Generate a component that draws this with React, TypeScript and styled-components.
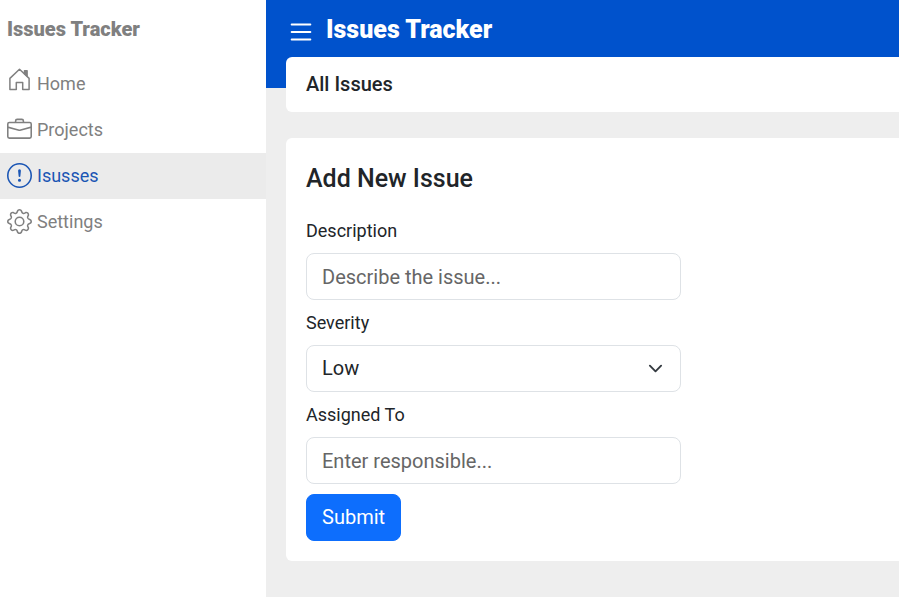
import React from "react";
import styled, { createGlobalStyle, css } from "styled-components";
import { BsBriefcase, BsExclamationCircle, BsGear, BsList } from "react-icons/bs";

const GlobalStyle = createGlobalStyle`
  *, *::before, *::after { box-sizing: border-box; }
  body { margin: 0; font-family: Roboto, sans-serif; font-size: 18px; line-height: 25px; color: #212529; background: #eee; }
`;

const Layout = styled.div`
  display: flex;
  min-height: 100vh;
`;

const Sidebar = styled.aside`
  flex: 0 0 266px;
  background: #fff;
`;

const Brand = styled.div`
  padding: 14px 7px 17px;
  font-size: 20px;
  line-height: 30px;
  font-weight: 900;
  color: #808080;
`;

const NavLink = styled.a<{ $active?: boolean; $raised?: boolean }>`
  display: flex;
  align-items: center;
  gap: 5px;
  height: 46px;
  padding: 0 7px 2px;
  color: #808080;
  text-decoration: none;
  ${(p) => p.$active && css`
    color: #1a55b4;
    background: #ebebeb;
  `}
  svg {
    width: 25px;
    height: 25px;
    margin-bottom: ${(p) => (p.$raised ? "8px" : "0")};
  }
`;

const Content = styled.div`
  flex: 1;
  min-width: 0;
`;

const Banner = styled.header`
  display: flex;
  align-items: flex-start;
  gap: 10px;
  height: 88px;
  padding: 14px 20px 0;
  background: #0052cc;
  color: #fff;
`;

const MenuButton = styled.button`
  display: flex;
  margin: 3px 0 0;
  padding: 0;
  border: 0;
  background: none;
  color: inherit;
`;

const Title = styled.h1`
  margin: 0;
  font-size: 25px;
  line-height: 32px;
  font-weight: 900;
`;

const Main = styled.main`
  display: grid;
  gap: 26px;
  margin-top: -31px;
  padding-left: 20px;
`;

const Panel = styled.section`
  padding: 20px;
  background: #fff;
  border-radius: 6px 0 0 6px;
`;

const PageBar = styled(Panel)`
  padding: 15px 20px;
  font-size: 20px;
  font-weight: 500;
`;

const Heading = styled.h2`
  margin: 0 0 18px;
  font-size: 25px;
  line-height: 42px;
  font-weight: 500;
`;

const Form = styled.form`
  display: flex;
  flex-direction: column;
  align-items: flex-start;
  gap: 10px;
`;

const Field = styled.label`
  display: grid;
  gap: 10px;
  width: 100%;
  max-width: 375px;
`;

const control = css`
  width: 100%;
  height: 47px;
  padding: 0 15px;
  border: 1px solid #dee2e6;
  border-radius: 8px;
  background: #fff;
  color: #212529;
  font: inherit;
  font-size: 20px;
`;

const Input = styled.input`
  ${control}
  &::placeholder { color: #666; opacity: 1; }
`;

const SelectWrap = styled.span`
  display: grid;
  align-items: center;
  > * { grid-area: 1 / 1; }
  svg { justify-self: end; margin-right: 18px; pointer-events: none; }
`;

const Select = styled.select`
  ${control}
  appearance: none;
`;

const Submit = styled.button`
  height: 47px;
  padding: 0 15px;
  border: 1px solid #0d6efd;
  border-radius: 8px;
  background: #0d6efd;
  color: #fff;
  font: inherit;
  font-size: 20px;
`;

const HouseIcon = () => (
  <svg viewBox="0 0 25 25" fill="none" stroke="currentColor" strokeWidth="1.5" strokeLinejoin="round" aria-hidden="true">
    <path d="M2.9 11.4 12.5 2.3l9.6 9.1v11.2h-6.4v-7.1H9.3v7.1H2.9z" />
    <path d="M17.5 3.8h2.6v5.2l-2.6-2.4z" fill="currentColor" />
  </svg>
);

const ChevronIcon = () => (
  <svg width="15" height="15" viewBox="0 0 16 16" fill="none" stroke="#343a40" strokeWidth="2" strokeLinecap="round" strokeLinejoin="round" aria-hidden="true">
    <path d="m2 5 6 6 6-6" />
  </svg>
);

export default function App() {
  return (
    <>
      <GlobalStyle />
      <Layout>
        <Sidebar>
          <Brand>Issues Tracker</Brand>
          <nav>
            <NavLink href="#home" $raised><HouseIcon />Home</NavLink>
            <NavLink href="#projects"><BsBriefcase />Projects</NavLink>
            <NavLink href="#issues" $active><BsExclamationCircle />Isusses</NavLink>
            <NavLink href="#settings"><BsGear />Settings</NavLink>
          </nav>
        </Sidebar>
        <Content>
          <Banner>
            <MenuButton type="button" aria-label="Toggle menu"><BsList size={30} /></MenuButton>
            <Title>Issues Tracker</Title>
          </Banner>
          <Main>
            <PageBar>All Issues</PageBar>
            <Panel>
              <Heading>Add New Issue</Heading>
              <Form onSubmit={(e) => e.preventDefault()}>
                <Field>Description<Input placeholder="Describe the issue..." /></Field>
                <Field>
                  Severity
                  <SelectWrap>
                    <Select defaultValue="Low"><option>Low</option><option>Medium</option><option>High</option></Select>
                    <ChevronIcon />
                  </SelectWrap>
                </Field>
                <Field>Assigned To<Input placeholder="Enter responsible..." /></Field>
                <Submit type="submit">Submit</Submit>
              </Form>
            </Panel>
          </Main>
        </Content>
      </Layout>
    </>
  );
}
